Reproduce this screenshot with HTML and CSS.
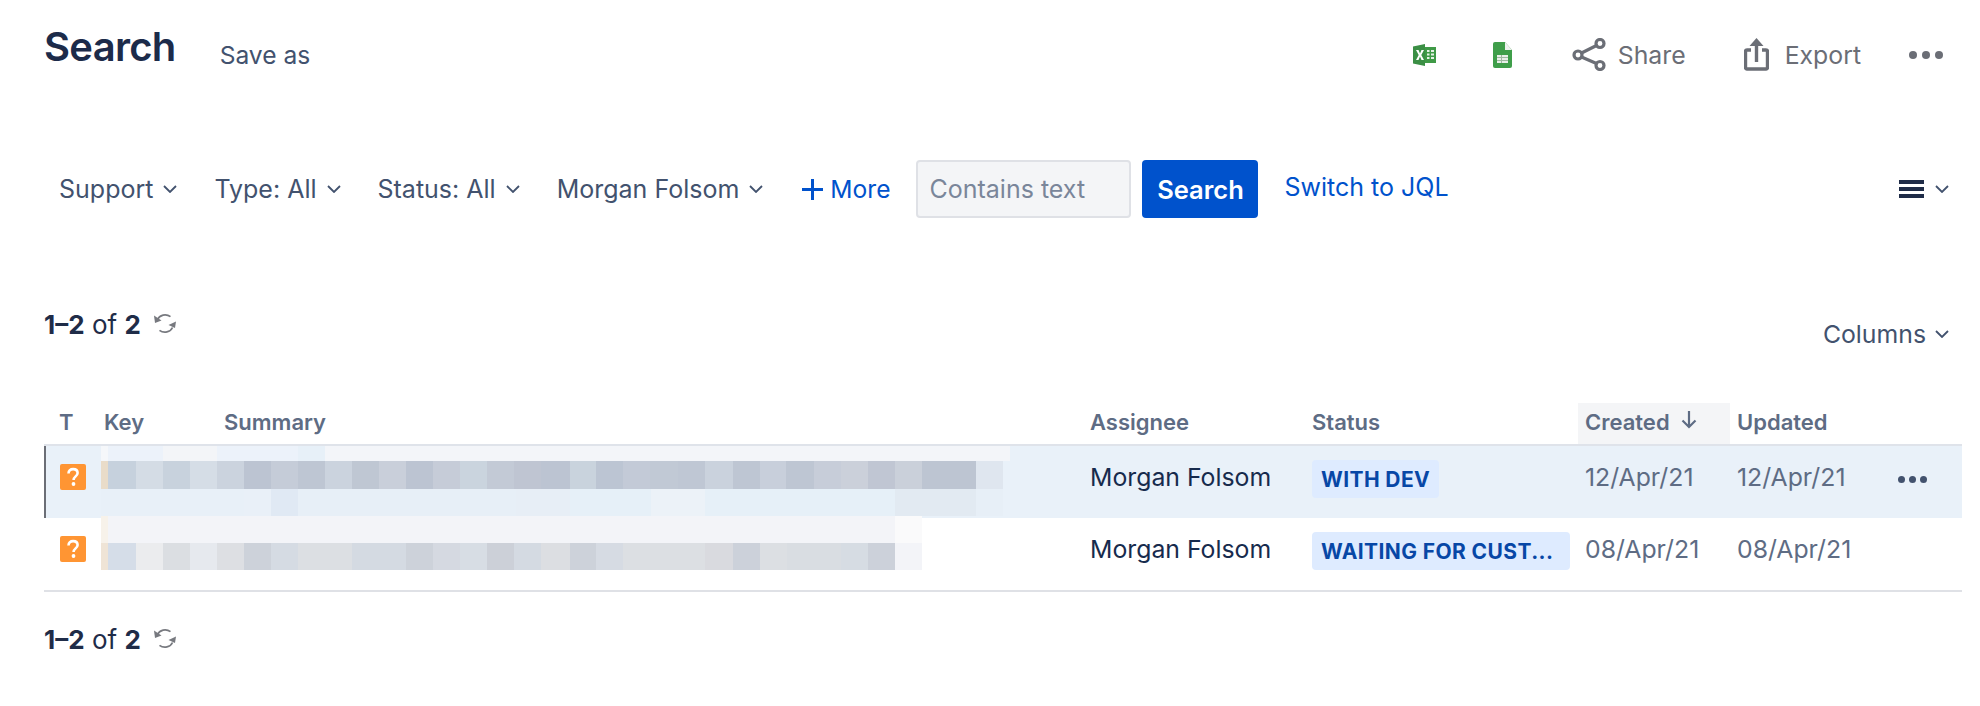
FILE: index.html
```html
<!DOCTYPE html>
<html lang="en">
<head>
<meta charset="utf-8">
<title>Search</title>
<link rel="stylesheet" href="styles.css">
</head>
<body>
<svg class="defs" width="0" height="0" aria-hidden="true">
  <defs>
    <symbol id="chev" viewBox="0 0 14 8"><path d="M1 1l6 6 6-6" fill="none" stroke="currentColor" stroke-width="1.8"/></symbol>
    <symbol id="refresh" viewBox="0 0 22 21">
      <path d="M3.500 6.500C5.500 1.800 12 .3 16.500 3.600" fill="none" stroke="#77797f" stroke-width="1.700"/>
      <path d="M0 2.500l1 7.500 6.500-2.500z" fill="#77797f"/>
      <path d="M18.500 14.500C16.500 19.200 10 20.700 5.500 17.400" fill="none" stroke="#77797f" stroke-width="1.700"/>
      <path d="M22 8.500l-7.500 3.500 6.500 3z" fill="#77797f"/>
    </symbol>
    <symbol id="help" viewBox="0 0 26 26">
      <rect width="26" height="26" rx="2" fill="#ff9533"/>
      <path d="M8.500 9.500c0-2.800 2-4.400 4.600-4.400s4.500 1.500 4.500 3.900c0 3.300-4 3.500-4 6.900" fill="none" stroke="#fff" stroke-width="2.600"/>
      <circle cx="13.500" cy="20" r="1.900" fill="#fff"/>
    </symbol>
  </defs>
</svg>

<header class="topbar">
  <h1 class="title">Search</h1>
  <a class="save">Save as</a>
  <div class="tools">
    <svg class="ico-excel" viewBox="0 0 23 22" width="23" height="22">
      <path d="M10 3h13v16H10z" fill="#3f9a47"/>
      <path d="M14 6h2.500v2H14zm4 0h3v2h-3zm-4 3.500h2.500v2H14zm4 0h3v2h-3zm-4 3.500h2.500v2H14zm4 0h3v2h-3z" fill="#e4f1e5"/>
      <path d="M0 2.500L12 0v22L0 19.500z" fill="#3b8f45"/>
      <path d="M3 6h2.500L7 9.400 8.500 6H11L8.300 11 11 16H8.500L7 12.600 5.500 16H3l2.700-5z" fill="#fff"/>
    </svg>
    <svg class="ico-sheet" viewBox="0 0 19 26" width="19" height="26">
      <path d="M2 0h10l7 8v16a2 2 0 0 1-2 2H2a2 2 0 0 1-2-2V2a2 2 0 0 1 2-2z" fill="#3f9e4a"/>
      <path d="M12 0l7 8h-7z" fill="#eef1ee"/>
      <path d="M4 13h11v8H4z" fill="#e8efe8"/>
      <path d="M4 15.500h11M4 18.500h11M8.500 13v8" stroke="#9fb8a2" stroke-width="1"/>
    </svg>
    <a class="tool tool-share">
      <svg viewBox="0 0 34 33" width="34" height="33" fill="none" stroke="#6b6e76" stroke-width="3.200">
        <circle cx="6" cy="17" r="4"/><circle cx="28" cy="5.500" r="4"/><circle cx="28" cy="27.500" r="4"/>
        <path d="M9.500 15L24.500 7.500M9.500 19L24.500 25.500"/>
      </svg>
      <span>Share</span>
    </a>
    <a class="tool tool-export">
      <svg viewBox="0 0 25 33" width="25" height="33" fill="none" stroke="#6b6e76" stroke-width="3.400">
        <path d="M7 12H3a1.500 1.500 0 0 0-1.500 1.500v16A1.500 1.500 0 0 0 3 31h19a1.500 1.500 0 0 0 1.500-1.500v-16A1.500 1.500 0 0 0 22 12H18"/>
        <path d="M12.500 24V4"/>
        <path d="M12.500 0l7 8h-14z" fill="#6b6e76" stroke="none"/>
      </svg>
      <span>Export</span>
    </a>
    <span class="dots dots-top"><i></i><i></i><i></i></span>
  </div>
</header>

<section class="filters">
  <a class="filter filter-support">Support <svg class="chev"><use href="#chev"/></svg></a>
  <a class="filter filter-type">Type: All <svg class="chev"><use href="#chev"/></svg></a>
  <a class="filter filter-status">Status: All <svg class="chev"><use href="#chev"/></svg></a>
  <a class="filter filter-user">Morgan Folsom <svg class="chev"><use href="#chev"/></svg></a>
  <a class="more"><svg viewBox="0 0 21 21" width="21" height="21"><path d="M10.500 0v21M0 10.500h21" stroke="#0052cc" stroke-width="3"/></svg>More</a>
  <div class="textbox">Contains text</div>
  <button class="go">Search</button>
  <a class="jql">Switch to JQL</a>
  <div class="view">
    <svg viewBox="0 0 25 18" width="25" height="18"><path d="M0 0h25v4H0zM0 7h25v4H0zM0 14h25v4H0z" fill="#1f2c48"/></svg>
    <svg class="chev"><use href="#chev"/></svg>
  </div>
</section>

<section class="meta">
  <p class="pager"><b>1–2</b> of <b>2</b><svg class="refresh"><use href="#refresh"/></svg></p>
  <a class="columns">Columns <svg class="chev"><use href="#chev"/></svg></a>
</section>

<section class="issues">
  <div class="grid thead">
    <div class="cell c-t">T</div>
    <div class="cell">Key</div>
    <div class="cell">Summary</div>
    <div class="cell">Assignee</div>
    <div class="cell">Status</div>
    <div class="cell sorted">Created <svg class="arrow" viewBox="0 0 16 18" width="16" height="18"><path d="M8 0v16M1.500 9.500L8 16l6.500-6.500" fill="none" stroke="#5e6c84" stroke-width="2.200"/></svg></div>
    <div class="cell">Updated</div>
  </div>

  <div class="grid row row-active">
    <div class="cell c-t"><svg class="help"><use href="#help"/></svg></div>
    <div class="mosaic">
      <div class="band band-a"></div>
      <div class="band band-b"></div>
      <div class="band band-c"></div>
    </div>
    <div class="cell user">Morgan Folsom</div>
    <div class="cell"><span class="lozenge">WITH DEV</span></div>
    <div class="cell date">12/Apr/21</div>
    <div class="cell date">12/Apr/21</div>
    <div class="cell"><span class="dots dots-row"><i></i><i></i><i></i></span></div>
  </div>

  <div class="grid row row-last">
    <div class="cell c-t"><svg class="help"><use href="#help"/></svg></div>
    <div class="mosaic mosaic-second">
      <div class="band band-d"></div>
      <div class="band band-e"></div>
    </div>
    <div class="cell user">Morgan Folsom</div>
    <div class="cell"><span class="lozenge lozenge-wide">WAITING FOR CUST...</span></div>
    <div class="cell date">08/Apr/21</div>
    <div class="cell date">08/Apr/21</div>
    <div class="cell"></div>
  </div>
</section>

<p class="pager pager-bottom"><b>1–2</b> of <b>2</b><svg class="refresh"><use href="#refresh"/></svg></p>
</body>
</html>
```

FILE: styles.css
```css
* { box-sizing: border-box; }
html, body { margin: 0; padding: 0; }
body {
  width: 1980px;
  height: 706px;
  overflow: hidden;
  background: #fff;
  color: #172b4d;
  font-family: Inter, "Liberation Sans", sans-serif;
  font-size: 24.8px;
}
.defs { display: block; position: absolute; }
a { color: inherit; text-decoration: none; }
i { display: block; }

/* top bar */
.topbar {
  height: 88px;
  padding: 23px 18px 0 44px;
  display: flex;
  align-items: flex-start;
}
.title {
  margin: 0;
  font-size: 40px;
  line-height: 48px;
  font-weight: 600;
  letter-spacing: -0.7px;
  color: #1c2b4a;
}
.save { margin: 17px 0 0 44px; color: #42526e; font-size: 24.6px; }
.tools {
  margin-left: auto;
  margin-top: 15px;
  display: flex;
  align-items: center;
  color: #6b6e76;
  height: 33px;
}
.ico-excel { margin-right: 57px; }
.ico-sheet { margin-right: 60px; }
.tool { display: flex; align-items: center; gap: 12px; }
.tool-export { margin-left: 58px; gap: 16px; }
.dots { display: inline-flex; }
.dots i { border-radius: 50%; background: #6b6e76; }
.dots-top { margin-left: 48px; margin-right: 19px; gap: 5px; }
.dots-top i { width: 8px; height: 8px; }

/* filters */
.filters {
  margin-top: 72px;
  height: 58px;
  padding: 0 31px 0 59px;
  display: flex;
  align-items: center;
  color: #42526e;
  font-size: 25px;
}
.filter { display: flex; align-items: center; gap: 10px; white-space: nowrap; }
.chev { width: 14px; height: 8px; color: #42526e; flex: none; }
.filter-support { margin-right: 37px; }
.filter-type { margin-right: 37px; }
.filter-status { margin-right: 37px; }
.filter-user { margin-right: 39px; }
.more { display: flex; align-items: center; gap: 7px; color: #0052cc; margin-right: 26px; font-size: 24.6px; }
.textbox {
  width: 215px;
  height: 58px;
  padding-left: 11px;
  display: flex;
  align-items: center;
  background: #f4f5f7;
  border: 2px solid #dfe1e6;
  border-radius: 4px;
  color: #7a869a;
}
.go {
  width: 116px;
  height: 58px;
  margin-left: 11px;
  padding: 0;
  border: 0;
  border-radius: 4px;
  background: #0052cc;
  color: #fff;
  font: 600 25.5px Inter, "Liberation Sans", sans-serif;
}
.jql { margin-left: 26px; padding-bottom: 4px; color: #0052cc; }
.view { margin-left: auto; display: flex; align-items: center; gap: 11px; padding-bottom: 1px; }

/* meta */
.meta {
  height: 185px;
  padding: 0 31px 0 44px;
  display: flex;
  justify-content: space-between;
  align-items: flex-start;
}
.pager { margin: 0; display: flex; align-items: center; white-space: pre; color: #1f2c48; line-height: 28px; font-size: 26px; }
.meta .pager { margin-top: 93px; }
.pager b { font-weight: 700; }
.refresh { width: 22px; height: 21px; margin-left: 13px; margin-top: -4px; }
.columns { margin-top: 101px; display: flex; align-items: center; gap: 9px; color: #42526e; }

/* table */
.issues { margin: 0 18px 0 44px; }
.grid {
  display: grid;
  grid-template-columns: 57px 986px 222px 273px 152px 160px 1fr;
}
.thead {
  grid-template-columns: 53px 120px 866px 222px 273px 152px 160px 1fr;
  height: 41px;
  color: #5e6c84;
  font-size: 22px;
  font-weight: 600;
}
.thead .cell { padding: 7px 0 0 7px; line-height: 24px; white-space: nowrap; }
.thead .c-t { padding-left: 15px; }
.sorted { background: #f4f5f7; }
.arrow { margin-left: 6px; vertical-align: 1px; }

.row { height: 72px; align-items: start; }
.row-active {
  border-top: 2px solid #dfe3ea;
  height: 74px;
  background: #e9f1f9;
  box-shadow: inset 2px 0 0 #6b6e76;
}
.row-last { border-bottom: 2px solid #dfe1e6; height: 74px; }
.row .cell { padding-left: 3px; height: 40px; margin-top: 13px; display: flex; align-items: center; }
.row .c-t { padding-left: 16px; margin-top: 11px; }
.row .user, .row .date { padding-bottom: 5px; }
.help { width: 26px; height: 26px; }
.user { color: #172b4d; }
.date { color: #5e6c84; }
.lozenge {
  height: 38px;
  padding: 0 9px;
  display: flex;
  align-items: center;
  background: #deebff;
  color: #0747a6;
  border-radius: 4px;
  font-size: 21px;
  font-weight: 700;
  letter-spacing: .4px;
  white-space: nowrap;
}
.lozenge-wide { width: 258px; }
.dots-row { gap: 4px; margin-left: 1px; }
.dots-row i { width: 7px; height: 7px; background: #42526e; }

/* redacted summaries */
.mosaic { height: 70px; }
.mosaic-second { margin-top: -2px; }
.band { width: 909px; }
.band-a {
  height: 15px;
  background: linear-gradient(90deg, #f5f7fa 0 7px, #ecf2fa 7px 62px, #f3f5f8 62px 116px, #ecf2fa 116px 197px, #e7f0f8 197px 224px, #f3f5f9 224px);
}
.band-b {
  height: 28px;
  background: linear-gradient(90deg,
    #e9dcc9 0 7px, #c6d1dd 7px 35px, #d4dce5 35px 62px, #c8d2dd 62px 89px, #d5dde6 89px 116px,
    #cbd3de 116px 143px, #bcc4d2 143px 170px, #c5ccd8 170px 197px, #bec6d3 197px 224px, #cbd3de 224px 251px,
    #bfc7d3 251px 278px, #c9cfda 278px 305px, #bcc4d2 305px 332px, #c6ccd8 332px 359px, #cad4de 359px 386px,
    #c3cad6 386px 413px, #bfc5d2 413px 440px, #bcc4d2 440px 469px, #c9d3dd 469px 495px, #bcc5d3 495px 522px,
    #c3cad7 522px 549px, #c1c9d5 549px 577px, #bfc7d4 577px 604px, #cad2dd 604px 632px, #bec6d3 632px 659px,
    #c8cfdb 659px 685px, #bec6d3 685px 713px, #c7cdd9 713px 740px, #cbd0da 740px 767px, #c0c6d3 767px 794px,
    #cad0da 794px 821px, #bdc5d2 821px 875px, #dfe6ef 875px 902px, #e9f1f9 902px);
}
.band-c {
  height: 27px;
  background: linear-gradient(90deg,
    #e8f0f8 0 143px, #e9f0f8 143px 170px, #e0e9f4 170px 197px, #e7eff7 197px 415px, #e7eef6 415px 469px,
    #e6f0f8 469px 550px, #ecf2f8 550px 604px, #e6f0f8 604px 794px, #e2eaf2 794px 875px, #e7eff7 875px 902px, #e9f1f9 902px);
}
.band-d {
  height: 27px;
  width: 821px;
  background: linear-gradient(90deg,
    #f7f2ea 0 7px, #f3f4f8 7px 794px, #fafafb 794px);
}
.band-e {
  height: 27px;
  width: 821px;
  background: linear-gradient(90deg,
    #efe4d6 0 7px, #d5dde8 7px 35px, #ebecee 35px 62px, #dbdee2 62px 89px, #e6e9ee 89px 116px,
    #dddfe3 116px 143px, #cdd2da 143px 170px, #d5dbe3 170px 197px, #dcdfe3 197px 251px, #d4dae2 251px 305px,
    #cdd2da 305px 332px, #d5d9e1 332px 359px, #d7dde4 359px 386px, #ccd0d8 386px 413px, #d4dae2 413px 440px,
    #dcdee2 440px 469px, #cdd2da 469px 495px, #d6dbe3 495px 522px, #dcdfe3 522px 604px, #d9dadf 604px 632px,
    #ccd1da 632px 659px, #dcdfe3 659px 686px, #d9dde2 686px 740px, #d6dce3 740px 767px, #ccd1da 767px 794px, #f3f4f8 794px);
}

.pager-bottom { margin: 34px 0 0 44px; }
```
